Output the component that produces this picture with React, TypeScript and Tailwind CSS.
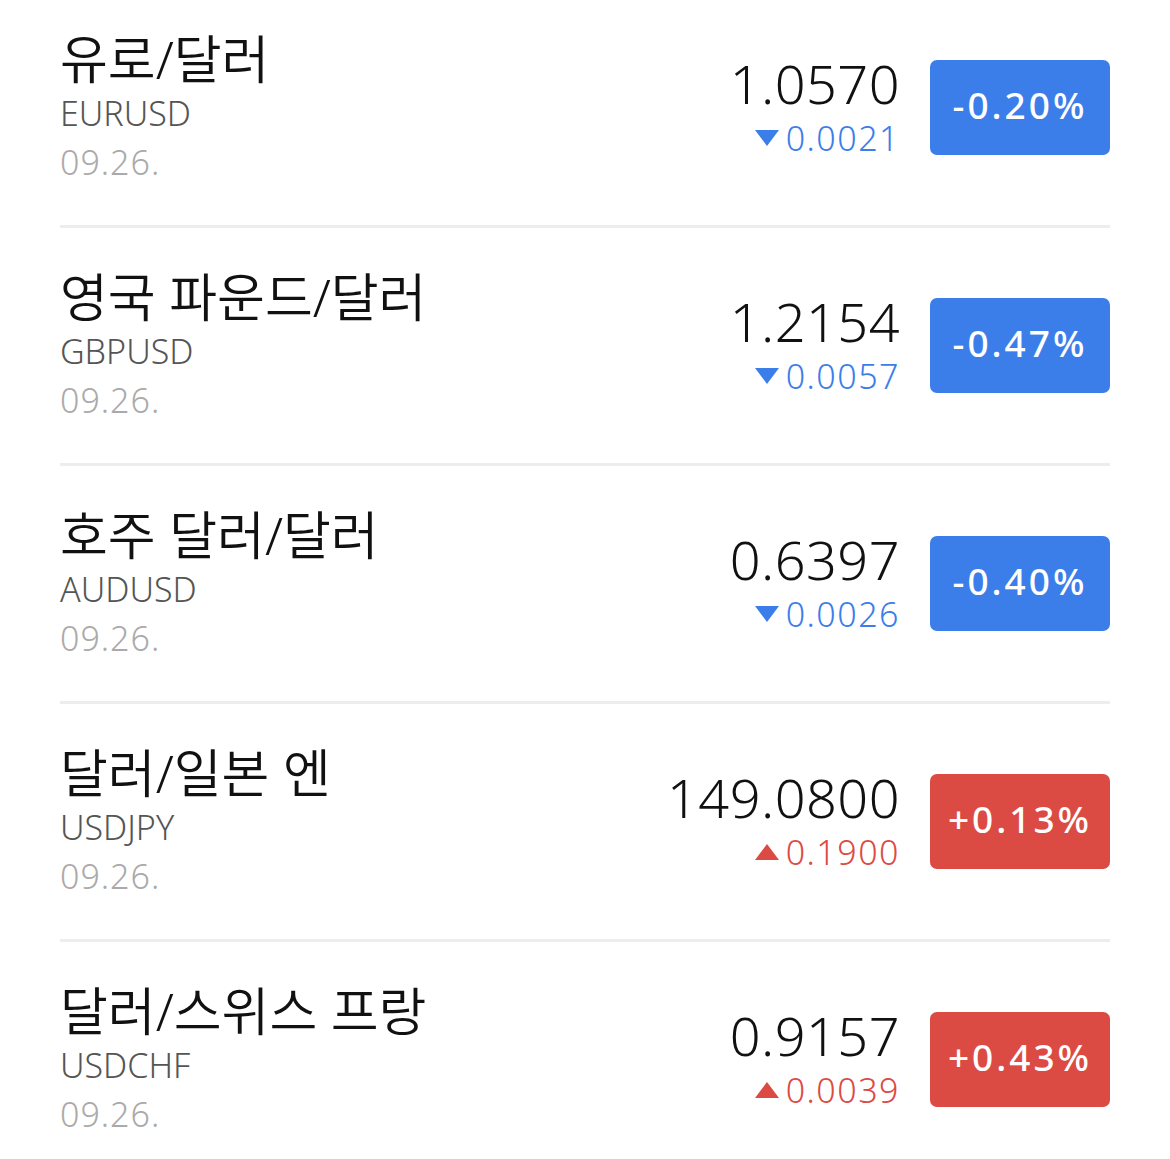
const rates = [
  { name: '유로/달러', code: 'EURUSD', date: '09.26.', price: '1.0570', change: '0.0021', pct: '-0.20%', up: false },
  { name: '영국 파운드/달러', code: 'GBPUSD', date: '09.26.', price: '1.2154', change: '0.0057', pct: '-0.47%', up: false },
  { name: '호주 달러/달러', code: 'AUDUSD', date: '09.26.', price: '0.6397', change: '0.0026', pct: '-0.40%', up: false },
  { name: '달러/일본 엔', code: 'USDJPY', date: '09.26.', price: '149.0800', change: '0.1900', pct: '+0.13%', up: true },
  { name: '달러/스위스 프랑', code: 'USDCHF', date: '09.26.', price: '0.9157', change: '0.0039', pct: '+0.43%', up: true },
]

function Arrow({ up }: { up: boolean }) {
  return (
    <svg width="24" height="16" viewBox="0 0 24 16" className={up ? 'fill-[#dc4a44]' : 'fill-[#3b7eea]'}>
      {up ? <polygon points="12,0 24,16 0,16" /> : <polygon points="0,0 24,0 12,16" />}
    </svg>
  )
}

export default function App() {
  return (
    <div
      className="h-[1159px] w-[1170px] overflow-hidden bg-white px-[60px]"
      style={{ fontFamily: '"Noto Sans", "Noto Sans CJK KR", sans-serif' }}
    >
      <div className="mt-[-10px]">
        {rates.map((r, i) => (
          <div key={r.code}>
            <div className="flex h-[235px] items-center justify-between">
              {/* left: name / code / date */}
              <div className="flex flex-col">
                <div className="h-[56px] text-[52px] font-[350] leading-[56px] text-[#111]">{r.name}</div>
                <div className="h-[52px] text-[34px] font-light leading-[52px] text-[#555]">{r.code}</div>
                <div className="h-[46px] text-[34px] font-light leading-[46px] tracking-[1px] text-[#aaa]">{r.date}</div>
              </div>

              {/* right: price + badge */}
              <div className="flex items-center gap-[30px]">
                <div className="flex flex-col items-end">
                  <div className="h-[60px] text-[54px] font-light leading-[60px] tracking-[0.5px] text-[#111]">{r.price}</div>
                  <div className={`flex h-[50px] items-center gap-[7px] text-[34px] font-light leading-[50px] tracking-[1.5px] ${r.up ? 'text-[#dc4a44]' : 'text-[#3b7eea]'}`}>
                    <Arrow up={r.up} />
                    <span>{r.change}</span>
                  </div>
                </div>
                <div
                  className={`flex h-[95px] w-[180px] items-center justify-center rounded-[7px] pb-[5px] text-[37px] font-medium tracking-[3px] text-white ${
                    r.up ? 'bg-[#dc4a44]' : 'bg-[#3b7eea]'
                  }`}
                >
                  {r.pct}
                </div>
              </div>
            </div>
            {i < rates.length - 1 && <div className="h-[3px] bg-[#ededed]" />}
          </div>
        ))}
      </div>
    </div>
  )
}
